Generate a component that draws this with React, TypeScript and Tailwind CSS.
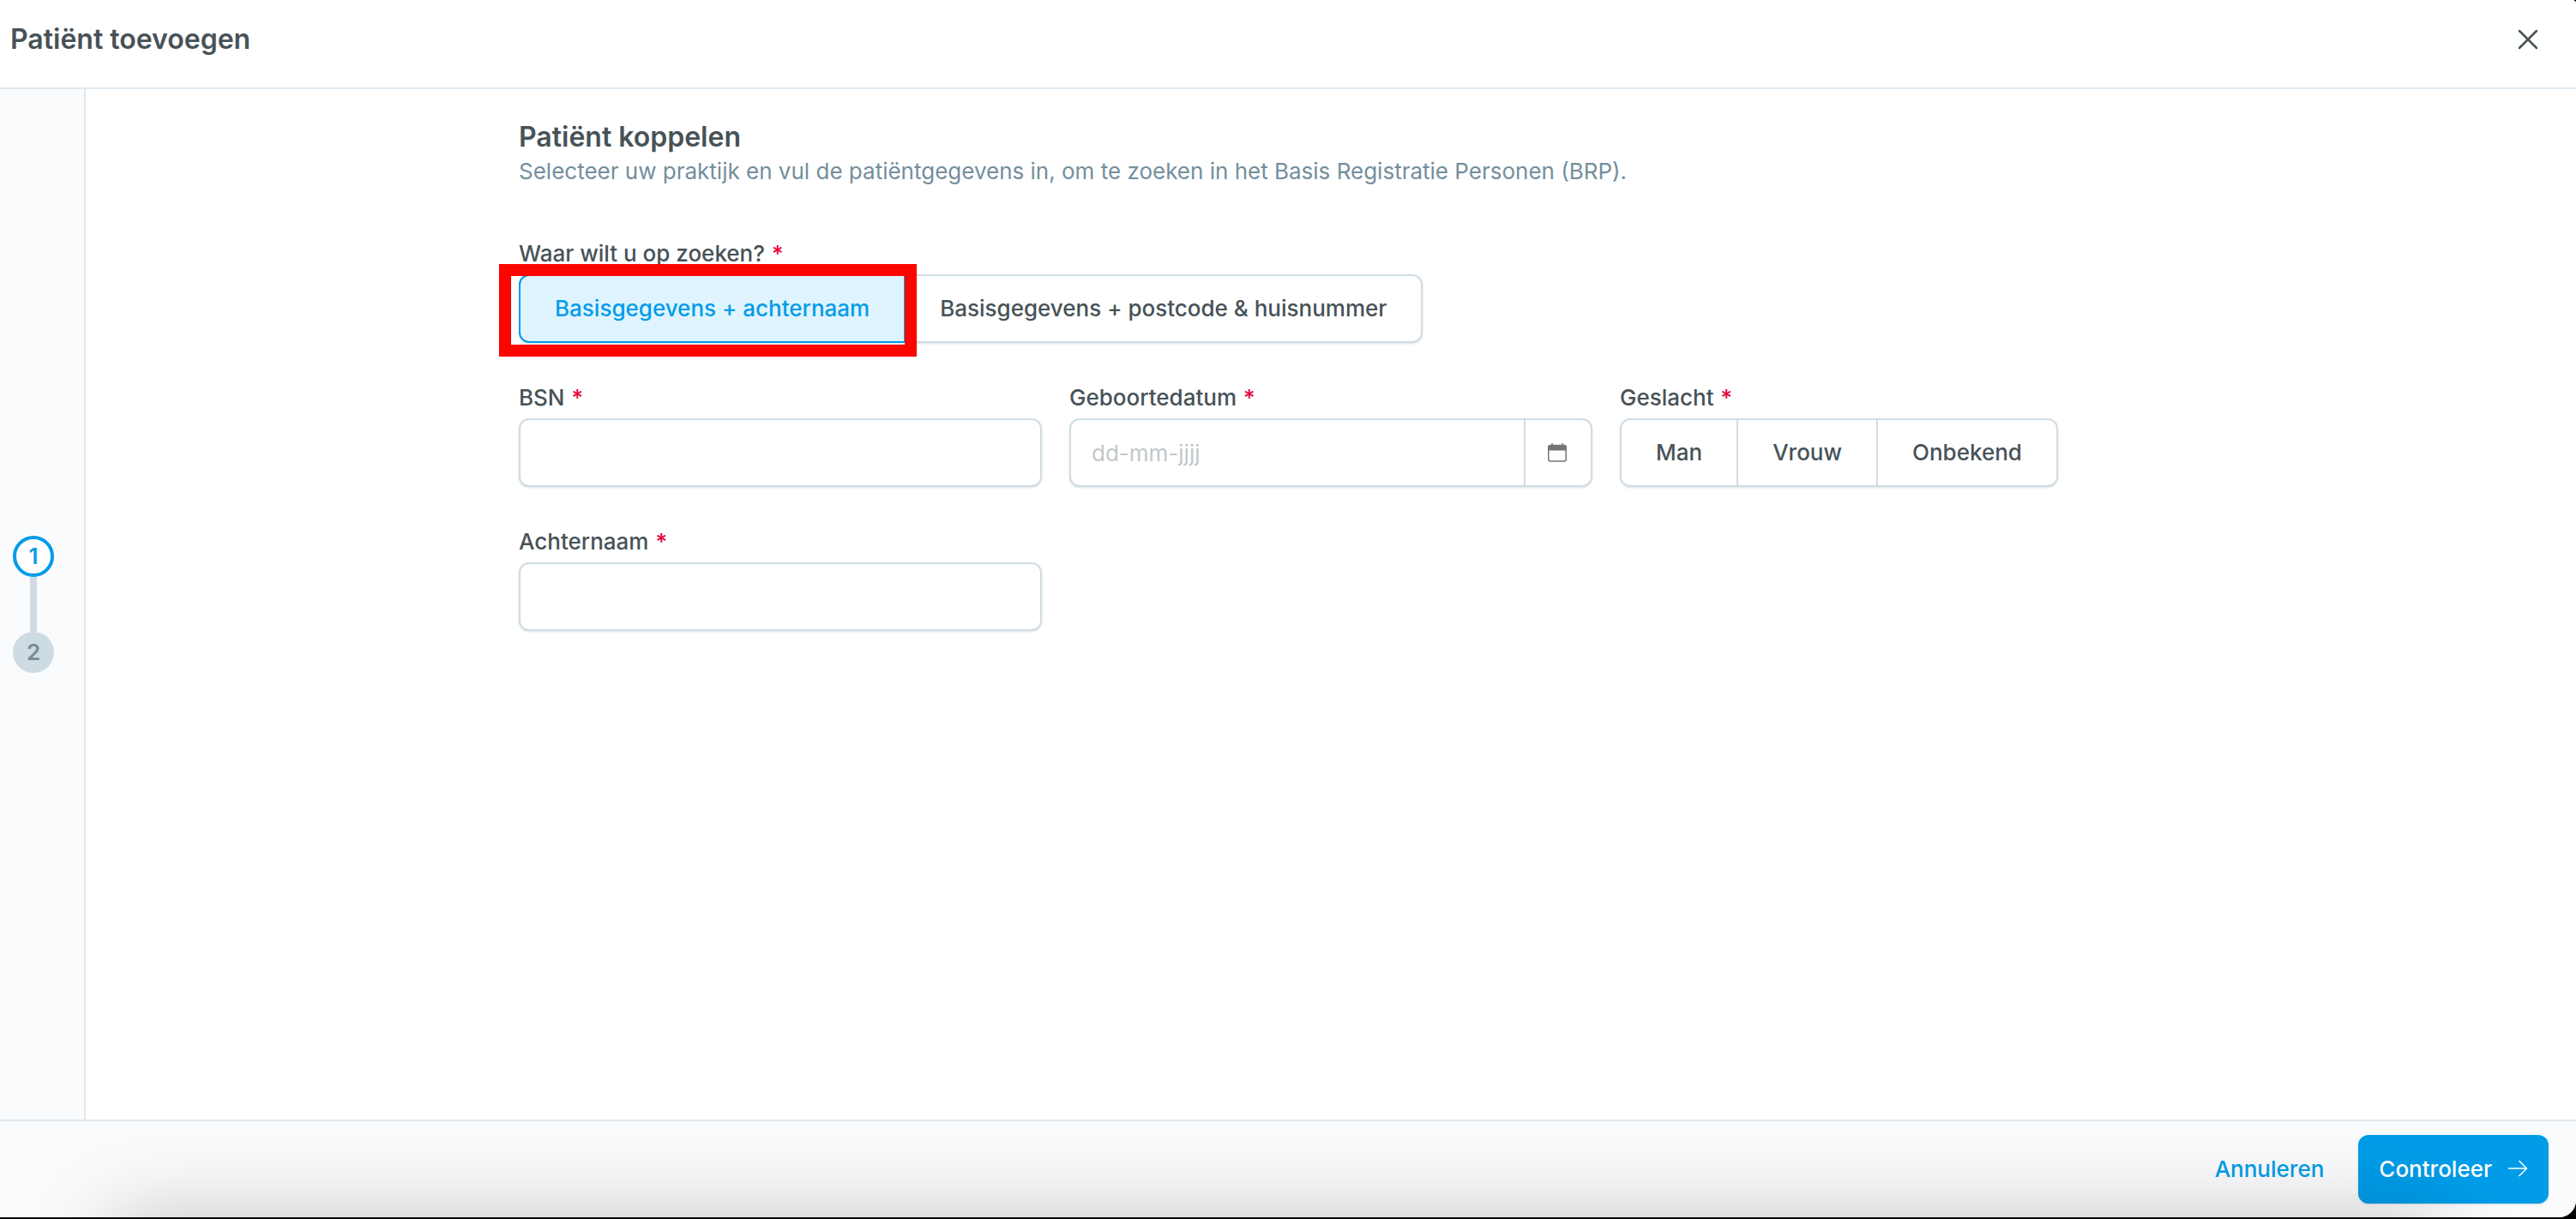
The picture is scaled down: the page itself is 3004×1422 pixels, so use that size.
import React from 'react';

interface FieldProps {
  id: string;
  label: string;
  children: React.ReactNode;
}

interface SegmentedProps {
  name: string;
  options: string[];
  value: string | null;
  onChange: (value: string) => void;
}

const SEARCH_OPTIONS = ['Basisgegevens + achternaam', 'Basisgegevens + postcode & huisnummer'];
const GENDER_OPTIONS = ['Man', 'Vrouw', 'Onbekend'];

const inputClass =
  'block h-20 w-full rounded-xl border-2 border-[#cfdde6] bg-white px-6 text-[26px] text-[#475257] shadow-sm outline-none placeholder:text-[#c1c7cb]';

function Required() {
  return <span className="ml-2 text-[#e4003a]">*</span>;
}

function Field({ id, label, children }: FieldProps) {
  return (
    <div>
      <label htmlFor={id} className="mb-2 block text-[26px] leading-8 font-medium">
        {label}
        <Required />
      </label>
      {children}
    </div>
  );
}

function Segmented({ name, options, value, onChange }: SegmentedProps) {
  return (
    <div className="flex h-20 w-fit rounded-xl shadow-sm">
      {options.map((option) => {
        const active = option === value;

        return (
          <label
            key={option}
            className={`relative -ml-0.5 flex cursor-pointer items-center border-2 px-10 pb-0.5 text-[26px] font-medium whitespace-nowrap first:ml-0 first:rounded-l-xl last:rounded-r-xl ${
              active ? 'z-10 border-[#009ce8] bg-[#dff4ff] text-[#009ce8]' : 'border-[#cfdde6] bg-white'
            }`}
          >
            <input
              type="radio"
              name={name}
              className="sr-only"
              checked={active}
              onChange={() => onChange(option)}
            />
            {option}
          </label>
        );
      })}
    </div>
  );
}

function CalendarIcon() {
  return (
    <svg className="h-[22px] w-[22px]" viewBox="0 0 22 22" fill="none">
      <rect x="0.75" y="2.5" width="20.5" height="18.5" rx="2.5" stroke="#757575" strokeWidth="1.5" />
      <path d="M0 5a3 3 0 0 1 3-3h16a3 3 0 0 1 3 3v3.500H0z" fill="#757575" />
      <path d="M5 0v3M17 0v3" stroke="#757575" strokeWidth="1.5" />
    </svg>
  );
}

export default function App() {
  const [searchBy, setSearchBy] = React.useState<string>(SEARCH_OPTIONS[0]);
  const [gender, setGender] = React.useState<string | null>(null);

  return (
    <div className="h-screen bg-black pb-0.5 font-['Inter',sans-serif] text-[#475257]">
      <div className="relative flex h-full flex-col overflow-hidden rounded-tr-sm rounded-br-[20px] bg-white">
        {/* Header */}
        <header className="flex h-26 shrink-0 items-center justify-between border-b-2 border-[#dfe8ef] pr-10 pb-2.5 pl-3">
          <h1 className="text-[32px] leading-10 font-semibold">Patiënt toevoegen</h1>
          <button type="button" aria-label="Sluiten" className="flex size-8 cursor-pointer items-center justify-center">
            <svg className="size-6" viewBox="0 0 24 24" fill="none" stroke="#475257" strokeWidth="2.5" strokeLinecap="round">
              <path d="M2 2l20 20M22 2L2 22" />
            </svg>
          </button>
        </header>

        <div className="flex min-h-0 flex-1">
          {/* Steps */}
          <aside className="flex w-25 shrink-0 items-center border-r-2 border-[#dfe8ef] bg-[#fafbfd] pl-[15px]">
            <ol className="flex flex-col items-center text-[26px] leading-8 font-semibold">
              <li className="flex size-12 items-center justify-center rounded-full border-4 border-[#009ce8] bg-white text-[#009ce8]">
                1
              </li>
              <li aria-hidden="true" className="h-16 w-2 bg-[#cfdbe2]"></li>
              <li className="flex size-12 items-center justify-center rounded-full bg-[#cfdbe2] text-[#748c99]">2</li>
            </ol>
          </aside>

          {/* Form */}
          <main className="flex-1 pt-9">
            <form className="mx-auto max-w-[1894px]">
              <h2 className="text-[32px] leading-10 font-semibold">Patiënt koppelen</h2>
              <p className="text-[26px] leading-10 text-[#748e9c]">
                Selecteer uw praktijk en vul de patiëntgegevens in, om te zoeken in het Basis Registratie Personen (BRP).
              </p>

              <fieldset className="mt-15">
                <legend className="mb-2 text-[26px] leading-8 font-medium">
                  Waar wilt u op zoeken?
                  <Required />
                </legend>
                <div className="relative w-fit">
                  <Segmented name="search-by" options={SEARCH_OPTIONS} value={searchBy} onChange={setSearchBy} />
                  <div className="pointer-events-none absolute -top-3 -left-[23px] z-20 h-27 w-[487px] border-14 border-[#fa0500]"></div>
                </div>
              </fieldset>

              <div className="mt-12 grid grid-cols-3 gap-x-8 gap-y-12">
                <Field id="bsn" label="BSN">
                  <input id="bsn" type="text" className={inputClass} />
                </Field>

                <Field id="birth-date" label="Geboortedatum">
                  <div className="flex h-20 rounded-xl border-2 border-[#cfdde6] bg-white shadow-sm">
                    <input
                      id="birth-date"
                      type="text"
                      placeholder="dd-mm-jjjj"
                      className="min-w-0 flex-1 px-6 text-[26px] outline-none placeholder:text-[#c1c7cb]"
                    />
                    <button
                      type="button"
                      aria-label="Kies datum"
                      className="flex w-[78px] cursor-pointer items-center justify-center border-l-2 border-[#cfdde6] pr-0.5"
                    >
                      <CalendarIcon />
                    </button>
                  </div>
                </Field>

                <fieldset>
                  <legend className="mb-2 text-[26px] leading-8 font-medium">
                    Geslacht
                    <Required />
                  </legend>
                  <Segmented name="gender" options={GENDER_OPTIONS} value={gender} onChange={setGender} />
                </fieldset>

                <Field id="last-name" label="Achternaam">
                  <input id="last-name" type="text" className={inputClass} />
                </Field>
              </div>
            </form>
          </main>
        </div>

        {/* Footer */}
        <footer className="flex shrink-0 items-center justify-end border-t-2 border-[#dfe8ef] bg-[#fafbfd] px-8 py-4 text-[26px] font-medium">
          <button type="button" className="h-20 cursor-pointer px-10 pb-0.5 text-[#009ce8]">
            Annuleren
          </button>
          <button
            type="button"
            className="flex h-20 cursor-pointer items-center gap-[18px] rounded-xl bg-[#009ce8] px-6 pb-0.5 text-white shadow-sm"
          >
            Controleer
            <svg className="size-6" viewBox="0 0 24 24" fill="none" stroke="currentColor" strokeWidth="1.5" strokeLinecap="round" strokeLinejoin="round">
              <path d="M1.500 12h21M14 3.500l8.500 8.500-8.500 8.500" />
            </svg>
          </button>
        </footer>

        {/* Shade rising from the bottom edge */}
        <div className="pointer-events-none absolute top-full right-40 left-32 h-40 shadow-[0_0_100px_rgba(0,0,0,0.22)]"></div>
      </div>
    </div>
  );
}
